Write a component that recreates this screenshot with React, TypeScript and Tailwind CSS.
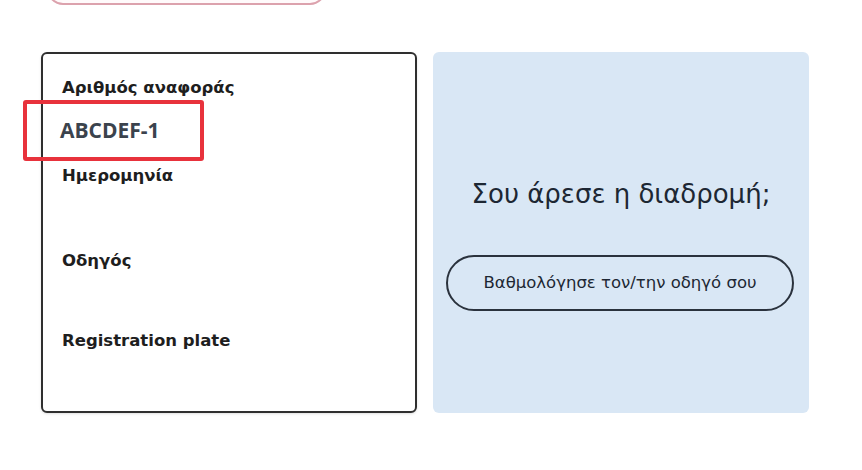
import React from 'react';

// Ride summary: details card on the left, rating prompt on the right
const fields = [
    { label: 'Αριθμός αναφοράς', value: 'ABCDEF-1', gap: 'mt-[18px]', h: 'h-7', after: 'mb-[22px]' },
    { label: 'Ημερομηνία', value: '', gap: 'mt-[18px]', h: 'h-7', after: 'mb-[19px]' },
    { label: 'Οδηγός', value: '', gap: 'mt-[18px]', h: 'h-6', after: 'mb-[18px]' },
    { label: 'Registration plate', value: '', gap: 'mt-[18px]', h: 'h-7', after: '' },
];

const App: React.FC = () => {
    return (
        <div className="relative min-h-[470px] w-[862px] bg-white overflow-hidden" style={{ fontFamily: '"DejaVu Sans", Verdana, sans-serif' }}>
            {/* previous action, scrolled off the top */}
            <div className="ml-[47px] -mt-[43px] h-12 w-[279px] rounded-2xl border-2 border-[#dca2ad] bg-[#fffafb]" />

            <div className="mt-[47px] ml-[41px] flex gap-4">
                {/* info card */}
                <div className="w-[376px] h-[361px] rounded-md border-2 border-[#2f2f2f] shadow-sm bg-white pl-[19px] pt-[24px]">
                    {fields.map((f) => (
                        <div key={f.label} className={f.after}>
                            <div className="h-5 text-[16.5px] leading-5 font-bold text-[#1e1e1e]">{f.label}</div>
                            <div
                                className={`${f.gap} ${f.h} -ml-[2px] text-[21px] leading-7 font-bold text-[#3b434d]`}
                                style={{ fontFamily: '"Open Sans", sans-serif' }}
                            >
                                {f.value}
                            </div>
                        </div>
                    ))}
                </div>

                {/* rating panel */}
                <div className="w-[376px] h-[361px] rounded-md bg-[#d9e7f5] flex flex-col items-center pt-[126px]">
                    <div className="text-[26px] leading-8 text-[#1d2733]">Σου άρεσε η διαδρομή;</div>
                    <button className="mt-[45px] ml-[-2px] w-[348px] h-14 rounded-full border-2 border-[#2a323d] text-[16.5px] text-[#1d2733]">
                        Βαθμολόγησε τον/την οδηγό σου
                    </button>
                </div>
            </div>

            {/* highlight annotation */}
            <div className="absolute left-[23px] top-[100px] w-[181px] h-[61px] rounded-[3px] border-4 border-[#e8323c]" />
        </div>
    );
};

export default App;
